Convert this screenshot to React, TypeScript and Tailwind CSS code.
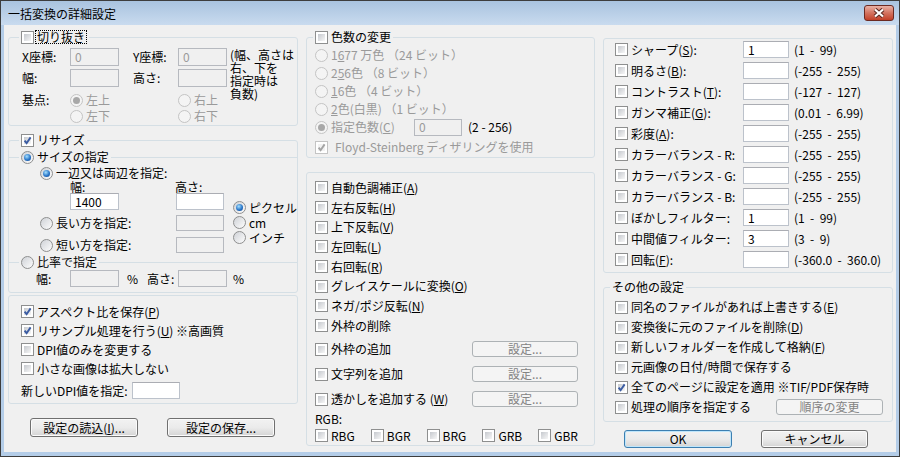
import type { ReactNode } from "react";

// Vista-style controls
function Check({ checked = false, disabled = false }: { checked?: boolean; disabled?: boolean }) {
  return (
    <span
      className={`relative inline-block w-[13px] h-[13px] shrink-0 border bg-white p-[2px] ${
        disabled ? "border-[#c4c4c4]" : "border-[#8e8f8f]"
      }`}
    >
      <span className={`block w-full h-full ${disabled ? "bg-[#f2f2f2]" : "bg-linear-to-br from-[#c6c9ce] to-[#f7f7f7]"}`} />
      {checked && (
        <svg className="absolute left-0 top-0" width="11" height="11" viewBox="0 0 11 11">
          <path
            d="M2.6 5.6 L4.6 8.2 L8.6 2.4"
            fill="none"
            stroke={disabled ? "#a4a4a4" : "#3b5ca3"}
            strokeWidth="1.9"
          />
        </svg>
      )}
    </span>
  );
}

function Radio({ checked = false, disabled = false }: { checked?: boolean; disabled?: boolean }) {
  return (
    <span
      className={`inline-flex items-center justify-center w-[13px] h-[13px] shrink-0 rounded-full border ${
        disabled ? "border-[#c4c4c4] bg-[#f4f4f4]" : "border-[#8e8f8f] bg-linear-to-br from-[#cfd2d7] to-[#fdfdfd]"
      }`}
    >
      {checked && (
        <span
          className={`w-[7px] h-[7px] rounded-full ${
            disabled ? "bg-[#a8a8a8]" : "bg-[radial-gradient(circle_at_40%_35%,#a5e0ff,#2a77c9_55%,#0e3f8a)]"
          }`}
        />
      )}
    </span>
  );
}

function Field({ value = "", disabled = false, className = "" }: { value?: string; disabled?: boolean; className?: string }) {
  return (
    <span
      className={`flex items-center pl-[4px] border shrink-0 ${
        disabled ? "border-[#b6b9bf] bg-[#f0f0f0] text-[#9a9a9a]" : "border-[#bcc2cb] border-t-[#abadb3] bg-white"
      } ${className}`}
    >
      {value}
    </span>
  );
}

function Btn({
  children,
  disabled = false,
  focused = false,
  className = "",
}: {
  children: ReactNode;
  disabled?: boolean;
  focused?: boolean;
  className?: string;
}) {
  const tone = disabled
    ? "border-[#adb2b5] bg-[#f4f4f4] text-[#838383]"
    : focused
    ? "border-[#3c7fb1] bg-linear-to-b from-[#f2f2f2] via-[#ebebeb] to-[#d4d4d4] shadow-[inset_0_0_0_1px_#bfe6fb]"
    : "border-[#707070] bg-linear-to-b from-[#f2f2f2] via-[#ebebeb] to-[#d4d4d4] shadow-[inset_0_0_0_1px_#fbfbfb]";
  return (
    <div className={`flex items-center justify-center rounded-[3px] border shrink-0 ${tone} ${className}`}>
      <span>{children}</span>
    </div>
  );
}

const box = "border border-[#d5dfe5] rounded-[3px]";
const dim = "text-[#9a9a9a]";

function CheckRow({ checked = false, children, className = "" }: { checked?: boolean; children: ReactNode; className?: string }) {
  return (
    <div className={`flex items-center gap-[3px] whitespace-nowrap ${className}`}>
      <Check checked={checked} />
      <span>{children}</span>
    </div>
  );
}

function RadioRow({
  checked = false,
  disabled = false,
  children,
  className = "",
}: {
  checked?: boolean;
  disabled?: boolean;
  children: ReactNode;
  className?: string;
}) {
  return (
    <div className={`flex items-center gap-[3px] whitespace-nowrap ${className}`}>
      <Radio checked={checked} disabled={disabled} />
      <span>{children}</span>
    </div>
  );
}

const adjustRows: { label: ReactNode; value: string; range: string }[] = [
  { label: <>シャープ(<u>S</u>):</>, value: "1", range: "(1  -  99)" },
  { label: <>明るさ(<u>B</u>):</>, value: "", range: "(-255  -  255)" },
  { label: <>コントラスト(<u>T</u>):</>, value: "", range: "(-127  -  127)" },
  { label: <>ガンマ補正(<u>G</u>):</>, value: "", range: "(0.01  -  6.99)" },
  { label: <>彩度(<u>A</u>):</>, value: "", range: "(-255  -  255)" },
  { label: <>カラーバランス - R:</>, value: "", range: "(-255  -  255)" },
  { label: <>カラーバランス - G:</>, value: "", range: "(-255  -  255)" },
  { label: <>カラーバランス - B:</>, value: "", range: "(-255  -  255)" },
  { label: <>ぼかしフィルター:</>, value: "1", range: "(1  -  99)" },
  { label: <>中間値フィルター:</>, value: "3", range: "(3  -  9)" },
  { label: <>回転(<u>F</u>):</>, value: "", range: "(-360.0  -  360.0)" },
];

const editRows: ReactNode[] = [
  <>自動色調補正(<u>A</u>)</>,
  <>左右反転(<u>H</u>)</>,
  <>上下反転(<u>V</u>)</>,
  <>左回転(<u>L</u>)</>,
  <>右回転(<u>R</u>)</>,
  <>グレイスケールに変換(<u>O</u>)</>,
  <>ネガ/ポジ反転(<u>N</u>)</>,
  <>外枠の削除</>,
];

export default function App() {
  return (
    <div className="w-[900px] h-[457px] flex flex-col bg-[#b4cde8] border border-[#3d3d3d] font-['Noto_Sans_CJK_JP','Noto_Sans',sans-serif] text-[12px] leading-[14px] text-black overflow-hidden">
      {/* title bar */}
      <div className="h-[24px] shrink-0 flex items-start justify-between bg-linear-to-b from-[#a9c3df] to-[#c9dbef]">
        <span className="ml-[7px] mt-[6px]">一括変換の詳細設定</span>
        <div className="mt-[4px] mr-[5px] w-[30px] h-[16px] rounded-[3px] border border-[#6b2a22] bg-linear-to-b from-[#e8b1a5] via-[#d3725f] to-[#c23f27] flex items-center justify-center">
          <svg width="14" height="10" viewBox="0 0 14 10">
            <path d="M3 1.5 L11 8.5 M11 1.5 L3 8.5" stroke="#5d2a22" strokeWidth="4.2" />
            <path d="M3 1.5 L11 8.5 M11 1.5 L3 8.5" stroke="#ffffff" strokeWidth="2.2" />
          </svg>
        </div>
      </div>

      {/* body */}
      <div className="flex-1 mx-[3px] mb-[4px] bg-[#f0f0f0] flex items-start">
        {/* left column */}
        <div className="ml-[4px] w-[290px] shrink-0 flex flex-col">
          <fieldset className={`${box} h-[96px] mt-[5px]`}>
            <legend className="ml-[10px] px-[2px]">
              <span className="flex items-center gap-[1px] h-[14px]">
                <Check />
                <span className="border border-dotted border-black leading-[12px] px-[1px]">切り抜き</span>
              </span>
            </legend>
            <div className="flex pl-[13px] pt-[4px]">
              <div className="w-[208px] shrink-0">
                <div className="flex items-center h-[18px]">
                  <span className="w-[48px]">X座標:</span>
                  <Field disabled value="0" className="w-[49px] h-[18px]" />
                  <span className="w-[59px] pl-[14px]">Y座標:</span>
                  <Field disabled value="0" className="w-[49px] h-[18px]" />
                </div>
                <div className="flex items-center h-[18px] mt-[3px]">
                  <span className="w-[48px]">幅:</span>
                  <Field disabled className="w-[49px] h-[18px]" />
                  <span className="w-[59px] pl-[14px]">高さ:</span>
                  <Field disabled className="w-[49px] h-[18px]" />
                </div>
                <div className="flex mt-[5px]">
                  <span className="w-[48px] leading-[16px]">基点:</span>
                  <div className={`w-[108px] ${dim}`}>
                    <RadioRow checked disabled className="h-[16px]">
                      左上
                    </RadioRow>
                    <RadioRow disabled className="h-[16px]">
                      左下
                    </RadioRow>
                  </div>
                  <div className={dim}>
                    <RadioRow disabled className="h-[16px]">
                      右上
                    </RadioRow>
                    <RadioRow disabled className="h-[16px]">
                      右下
                    </RadioRow>
                  </div>
                </div>
              </div>
              <div className="leading-[13px] whitespace-nowrap">
                (幅、高さは
                <br />
                右、下を
                <br />
                指定時は
                <br />
                負数)
              </div>
            </div>
          </fieldset>

          <fieldset className={`${box} h-[160px] mt-[7px]`}>
            <legend className="ml-[10px] px-[2px]">
              <span className="flex items-center gap-[3px] h-[14px]">
                <Check checked />
                <span>リサイズ</span>
              </span>
            </legend>
            <fieldset className="border-t border-[#d5dfe5] mt-[3px]">
              <legend className="ml-[10px] px-[2px]">
                <RadioRow checked className="h-[14px]">
                  サイズの指定
                </RadioRow>
              </legend>
              <div className="flex pl-[31px]">
                <div className="w-[193px] shrink-0">
                  <RadioRow checked className="h-[14px] mt-[2px]">
                    一辺又は両辺を指定:
                  </RadioRow>
                  <div className="flex h-[12px] leading-[12px] mt-[1px]">
                    <span className="w-[135px] pl-[30px]">幅:</span>
                    <span>高さ:</span>
                  </div>
                  <div className="flex items-center h-[17px] pl-[30px]">
                    <Field value="1400" className="w-[49px] h-[17px]" />
                    <Field className="w-[48px] h-[17px] ml-[57px]" />
                  </div>
                  <div className="flex items-center mt-[5px] h-[16px]">
                    <RadioRow className="w-[136px]">長い方を指定:</RadioRow>
                    <Field disabled className="w-[48px] h-[16px]" />
                  </div>
                  <div className="flex items-center mt-[6px] h-[16px]">
                    <RadioRow className="w-[136px]">短い方を指定:</RadioRow>
                    <Field disabled className="w-[48px] h-[16px]" />
                  </div>
                </div>
                <div className="mt-[36px]">
                  <RadioRow checked className="h-[15px]">
                    ピクセル
                  </RadioRow>
                  <RadioRow className="h-[15px]">cm</RadioRow>
                  <RadioRow className="h-[15px]">インチ</RadioRow>
                </div>
              </div>
            </fieldset>
            <fieldset className="border-t border-[#d5dfe5] mt-[2px]">
              <legend className="ml-[10px] px-[2px]">
                <RadioRow className="h-[14px]">比率で指定</RadioRow>
              </legend>
              <div className="flex items-center mt-[1px] h-[17px] pl-[27px]">
                <span className="w-[34px]">幅:</span>
                <Field disabled className="w-[49px] h-[17px]" />
                <span className="w-[28px] pl-[8px]">%</span>
                <span className="w-[31px]">高さ:</span>
                <Field disabled className="w-[49px] h-[17px]" />
                <span className="pl-[6px]">%</span>
              </div>
            </fieldset>
          </fieldset>

          <div className={`${box} h-[109px] mt-[2px] pt-[6px] pl-[12px]`}>
            <CheckRow checked className="h-[19px]">
              アスペクト比を保存(<u>P</u>)
            </CheckRow>
            <CheckRow checked className="h-[19px]">
              リサンプル処理を行う(<u>U</u>) ※高画質
            </CheckRow>
            <CheckRow className="h-[19px]">DPI値のみを変更する</CheckRow>
            <CheckRow className="h-[19px]">小さな画像は拡大しない</CheckRow>
            <div className="flex items-center h-[17px] mt-[4px]">
              <span className="w-[111px]">新しいDPI値を指定:</span>
              <Field className="w-[48px] h-[17px]" />
            </div>
          </div>

          <div className="flex mt-[14px] pl-[22px] gap-[29px]">
            <Btn className="w-[108px] h-[19px]">
              設定の読込(<u>I</u>)...
            </Btn>
            <Btn className="w-[108px] h-[19px]">設定の保存...</Btn>
          </div>
        </div>

        {/* middle column */}
        <div className="ml-[8px] w-[289px] shrink-0 flex flex-col">
          <fieldset className={`${box} h-[128px] mt-[5px]`}>
            <legend className="ml-[6px] px-[2px]">
              <span className="flex items-center gap-[3px] h-[14px]">
                <Check />
                <span>色数の変更</span>
              </span>
            </legend>
            <div className={`pt-[2px] pl-[8px] ${dim}`}>
              <RadioRow disabled className="h-[18px]">
                1<u>6</u>77 万色 （24 ビット）
              </RadioRow>
              <RadioRow disabled className="h-[18px]">
                2<u>5</u>6色 （8 ビット）
              </RadioRow>
              <RadioRow disabled className="h-[18px]">
                <u>1</u>6色 （4 ビット）
              </RadioRow>
              <RadioRow disabled className="h-[18px]">
                <u>2</u>色(白黒) （1 ビット）
              </RadioRow>
              <div className="flex items-center h-[18px]">
                <RadioRow checked disabled className="w-[99px]">
                  指定色数(<u>C</u>)
                </RadioRow>
                <Field disabled value="0" className="w-[48px] h-[17px]" />
                <span className="ml-[6px] text-black whitespace-pre">(2 - 256)</span>
              </div>
              <div className="flex items-center gap-[7px] h-[18px] mt-[2px]">
                <Check checked disabled />
                <span>Floyd-Steinberg ディザリングを使用</span>
              </div>
            </div>
          </fieldset>

          <div className={`${box} h-[274px] mt-[14px] pt-[5px] pl-[8px]`}>
            {editRows.map((r, i) => (
              <CheckRow key={i} className="h-[19.7px]">
                {r}
              </CheckRow>
            ))}
            <div className="mt-[1px]">
              {[
                <>外枠の追加</>,
                <>文字列を追加</>,
                <>
                  透かしを追加する (<u>W</u>)
                </>,
              ].map((r, i) => (
                <div key={i} className="flex items-center h-[25px]">
                  <CheckRow className="w-[157px]">{r}</CheckRow>
                  <Btn disabled className="w-[106px] h-[16px]">
                    設定...
                  </Btn>
                </div>
              ))}
            </div>
            <div className="h-[14px]">RGB:</div>
            <div className="flex items-center h-[16px] mt-[2px]">
              {["RBG", "BGR", "BRG", "GRB", "GBR"].map((t) => (
                <CheckRow key={t} className="w-[56px]">
                  {t}
                </CheckRow>
              ))}
            </div>
          </div>
        </div>

        {/* right column */}
        <div className="ml-[8px] w-[290px] shrink-0 flex flex-col">
          <div className={`${box} h-[235px] mt-[13px] pl-[11px]`}>
            {adjustRows.map((r, i) => (
              <div key={i} className="flex items-center h-[21px]">
                <CheckRow className="w-[128px]">{r.label}</CheckRow>
                <Field value={r.value} className="w-[46px] h-[17px]" />
                <span className="ml-[5px] whitespace-pre">{r.range}</span>
              </div>
            ))}
          </div>

          <fieldset className={`${box} h-[142px] mt-[7px]`}>
            <legend className="ml-[6px] px-[2px] h-[14px]">その他の設定</legend>
            <div className="pt-[3px] pl-[11px]">
              <CheckRow className="h-[20px]">
                同名のファイルがあれば上書きする(<u>E</u>)
              </CheckRow>
              <CheckRow className="h-[20px]">
                変換後に元のファイルを削除(<u>D</u>)
              </CheckRow>
              <CheckRow className="h-[20px]">
                新しいフォルダーを作成して格納(<u>F</u>)
              </CheckRow>
              <CheckRow className="h-[20px]">元画像の日付/時間で保存する</CheckRow>
              <CheckRow checked className="h-[20px]">
                全てのページに設定を適用 ※TIF/PDF保存時
              </CheckRow>
              <div className="flex items-center h-[20px]">
                <CheckRow className="w-[161px]">処理の順序を指定する</CheckRow>
                <Btn disabled className="w-[107px] h-[16px]">
                  順序の変更
                </Btn>
              </div>
            </div>
          </fieldset>

          <div className="flex mt-[8px] pl-[21px] gap-[29px]">
            <Btn focused className="w-[108px] h-[18px]">
              OK
            </Btn>
            <Btn className="w-[107px] h-[18px]">キャンセル</Btn>
          </div>
        </div>
      </div>
    </div>
  );
}
